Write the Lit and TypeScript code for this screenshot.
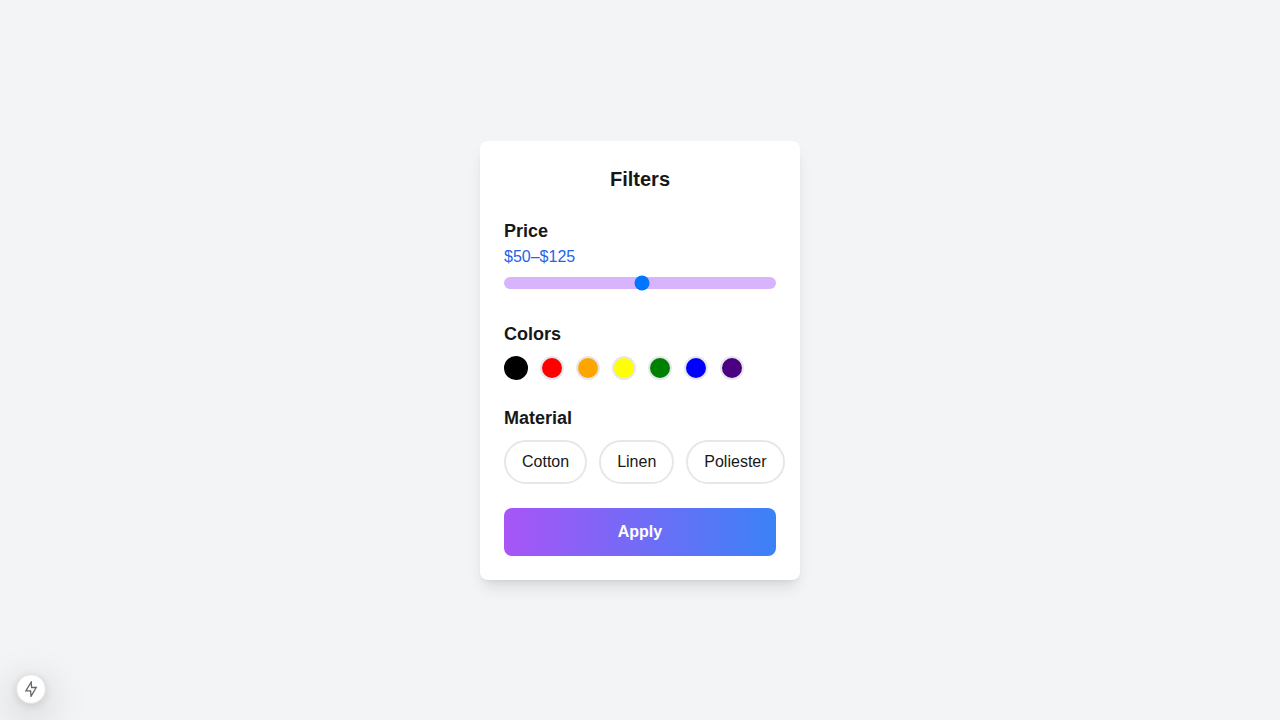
import { LitElement, html, css } from "lit";
import { customElement, state } from "lit/decorators.js";
import { classMap } from "lit/directives/class-map.js";
import { styleMap } from "lit/directives/style-map.js";

const COLORS = ["black", "red", "orange", "yellow", "green", "blue", "indigo"];
const MATERIALS = ["Cotton", "Linen", "Poliester"];

@customElement("filter-card")
class FilterCard extends LitElement {
  static styles = css`
    :host {
      display: block;
      box-sizing: border-box;
      width: 100%;
      max-width: 320px;
      padding: 24px;
      border-radius: 8px;
      background: #fff;
      box-shadow: 0 10px 15px -3px rgb(0 0 0 / 0.1), 0 4px 6px -4px rgb(0 0 0 / 0.1);
    }
    h2,
    h3 {
      margin: 0;
    }
    h2 {
      font-size: 20px;
      line-height: 28px;
      text-align: center;
      margin-bottom: 24px;
    }
    h3 {
      font-size: 18px;
      line-height: 28px;
    }
    section {
      margin-bottom: 24px;
    }
    button {
      font: inherit;
      color: inherit;
      cursor: pointer;
    }
    .price {
      display: block;
      color: #2563eb;
    }
    .track {
      padding: 8px 0 7px;
    }
    .slider {
      display: block;
      appearance: none;
      width: 100%;
      height: 12px;
      margin: 0;
      border-radius: 8px;
      background: #d8b4fe;
      cursor: pointer;
    }
    .row {
      display: flex;
      gap: 12px;
      margin-top: 8px;
    }
    .swatch {
      flex: none;
      box-sizing: border-box;
      width: 24px;
      height: 24px;
      padding: 0;
      border: 2px solid #e5e7eb;
      border-radius: 50%;
    }
    .swatch.selected {
      border-color: #000;
    }
    .chip {
      flex: none;
      padding: 8px 16px;
      border: 2px solid #e5e7eb;
      border-radius: 24px;
      background: #fff;
    }
    .chip.selected {
      border-color: #000;
    }
    .apply {
      display: block;
      width: 100%;
      padding: 12px;
      border: 0;
      border-radius: 8px;
      color: #fff;
      font-weight: 600;
      background: linear-gradient(to right, #a855f7, #3b82f6);
    }
  `;

  @state() private color = "black";
  @state() private material = "";

  render() {
    return html`
      <h2>Filters</h2>
      <section>
        <h3><label for="price">Price</label></h3>
        <output class="price" for="price">$50–$125</output>
        <div class="track">
          <input class="slider" id="price" type="range" min="0" max="250" value="127" />
        </div>
      </section>
      <section>
        <h3>Colors</h3>
        <div class="row">
          ${COLORS.map(
            (c) => html`<button
              type="button"
              class=${classMap({ swatch: true, selected: c === this.color })}
              style=${styleMap({ backgroundColor: c })}
              aria-label=${c}
              aria-pressed=${c === this.color}
              @click=${() => (this.color = c)}
            ></button>`
          )}
        </div>
      </section>
      <section>
        <h3>Material</h3>
        <div class="row">
          ${MATERIALS.map(
            (m) => html`<button
              type="button"
              class=${classMap({ chip: true, selected: m === this.material })}
              aria-pressed=${m === this.material}
              @click=${() => (this.material = m)}
            >${m}</button>`
          )}
        </div>
      </section>
      <button type="button" class="apply">Apply</button>
    `;
  }
}

@customElement("app-root")
class AppRoot extends LitElement {
  static styles = css`
    :host {
      display: flex;
      align-items: center;
      justify-content: center;
      min-height: 100vh;
      background: #f3f4f6;
      color: #171717;
      font: 16px/24px "Liberation Sans", Arial, sans-serif;
    }
    .indicator {
      position: fixed;
      left: 16px;
      bottom: 16px;
      display: grid;
      place-items: center;
      width: 30px;
      height: 30px;
      padding: 0;
      border: 1px solid #dfe0e1;
      border-radius: 50%;
      background: #fff;
      box-shadow: 0 11px 40px rgb(0 0 0 / 0.25), 0 2px 10px rgb(0 0 0 / 0.12);
    }
    .bolt {
      display: block;
      width: 16px;
      height: 16px;
    }
  `;

  render() {
    return html`
      <filter-card></filter-card>
      <button type="button" class="indicator" aria-label="Static route">
        <svg class="bolt" viewBox="0 0 16 16" fill="none" stroke="#666" stroke-width="1.3">
          <path d="M8.2 1 2.9 9.8H7.6L8 15.4 13.2 6.5H8.6Z" />
        </svg>
      </button>
    `;
  }
}
